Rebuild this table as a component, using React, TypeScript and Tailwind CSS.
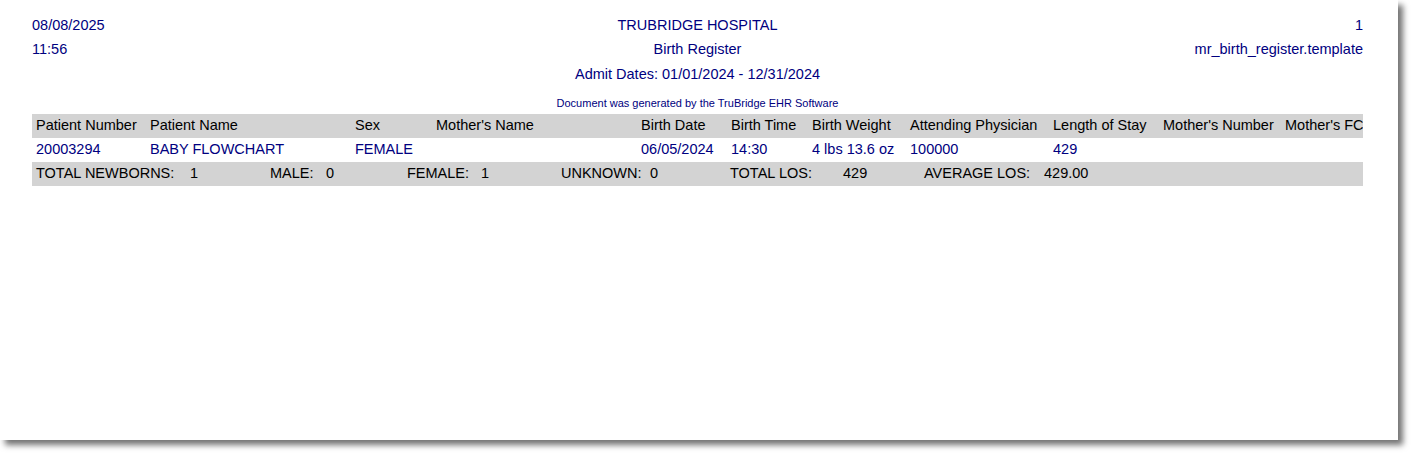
const headers = [
    "Patient Number",
    "Patient Name",
    "Sex",
    "Mother's Name",
    "Birth Date",
    "Birth Time",
    "Birth Weight",
    "Attending Physician",
    "Length of Stay",
    "Mother's Number",
    "Mother's FC",
];

const row = ["20003294", "BABY FLOWCHART", "FEMALE", "", "06/05/2024", "14:30", "4 lbs 13.6 oz", "100000", "429", "", ""];

const totals = ["TOTAL NEWBORNS:", "1", "MALE:", "0", "FEMALE:", "1", "UNKNOWN:", "0", "TOTAL LOS:", "429", "AVERAGE LOS:", "429.00"];

const cols = "grid grid-cols-[114px_205px_81px_205px_90px_81px_98px_143px_110px_122px_1fr] pl-[4px] h-[24px] items-center overflow-hidden whitespace-nowrap";

export default function App() {
    return (
        <div className="w-[1411px] h-[453px] bg-white font-['Liberation_Sans',Arial,sans-serif] text-[14.5px]">
            <div className="w-[1398px] h-[440px] bg-white shadow-[5px_5px_6px_rgba(0,0,0,0.55)] pl-[32px] pr-[35px] pt-[13px] text-[#000080]">
                <div className="grid grid-cols-[1fr_auto_1fr] leading-[24px]">
                    <div>
                        <p>08/08/2025</p>
                        <p>11:56</p>
                    </div>
                    <div className="text-center">
                        <p>TRUBRIDGE HOSPITAL</p>
                        <p>Birth Register</p>
                        <p className="leading-[26px]">Admit Dates: 01/01/2024 - 12/31/2024</p>
                    </div>
                    <div className="text-right">
                        <p>1</p>
                        <p>mr_birth_register.template</p>
                    </div>
                </div>
                <p className="mt-[9px] text-center text-[11px] leading-[14px]">
                    Document was generated by the TruBridge EHR Software
                </p>
                <div className="mt-[4px]">
                    <div className={`${cols} bg-[#d3d3d3] text-black`}>
                        {headers.map((h) => (
                            <span key={h}>{h}</span>
                        ))}
                    </div>
                    <div className={cols}>
                        {row.map((c, i) => (
                            <span key={i}>{c}</span>
                        ))}
                    </div>
                    <div className="grid grid-cols-[154px_80px_56px_81px_74px_80px_89px_80px_113px_81px_120px_1fr] pl-[4px] h-[24px] items-center bg-[#d3d3d3] text-black whitespace-nowrap">
                        {totals.map((t, i) => (
                            <span key={i}>{t}</span>
                        ))}
                    </div>
                </div>
            </div>
        </div>
    );
}
